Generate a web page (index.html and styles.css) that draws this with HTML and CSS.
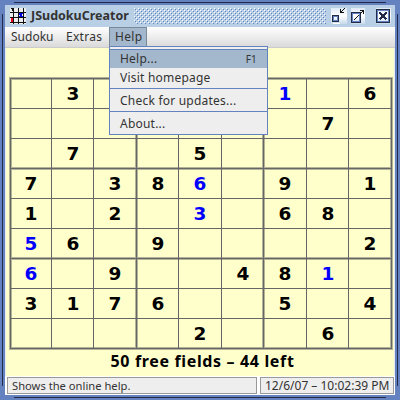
FILE: index.html
```
<!DOCTYPE html>
<html lang="en"><head><meta charset="utf-8"><title>JSudokuCreator</title><link rel="stylesheet" href="styles.css"></head>
<body>
<div class="window">
<i class="edge top"></i><i class="edge bottom"></i><i class="edge left"></i><i class="edge right"></i>
<header class="titlebar">
<svg class="logo" width="16" height="16" shape-rendering="crispEdges"><path fill="#eee" d="M0 0h16v16H0z"/><path fill="#111" d="M3 0h1v16h-1zM8 0h1v16h-1zM13 0h1v16h-1zM0 4h16v1H0zM0 9h16v1H0zM0 14h16v1H0zM1 0h2v3h-1v-2h-1z"/><path fill="#00d" d="M9 5h4v1h-1v2h1v1H9V8h1V7H9z"/><path fill="#e02" d="M1 10h2v4H1z"/></svg>
<span class="title">JSudokuCreator</span>
<svg class="bumps" width="192" height="16" shape-rendering="crispEdges"><defs><pattern id="b" width="4" height="4" patternUnits="userSpaceOnUse"><path fill="#fff" d="M0 0h1v1H0zM2 2h1v1H2z"/><path fill="#6382bf" d="M1 1h1v1H1zM3 3h1v1H3z"/></pattern></defs><path fill="url(#b)" d="M0 0h192v16H0z"/></svg>
<svg class="buttons" width="60" height="16" shape-rendering="crispEdges"><defs><linearGradient id="g" x2="0" y2="1"><stop stop-color="#dfeaf5"/><stop offset=".5" stop-color="#fff"/><stop offset="1" stop-color="#c7d9eb"/></linearGradient></defs>
<path fill="url(#g)" d="M0 0h16v16H0zM20 0h14v16H20zM45 0h15v16H45z"/>
<path fill="#fff" d="M2 15h7v1H2z"/><path fill="none" stroke="#222b48" d="M1.500 7.500h6v6h-6z"/><path fill="none" stroke="#6382bf" d="M2.500 8.500h4v4h-4z"/><path fill="#111" d="M9 1h1v3h3v1H9zM10 3h1v1h-1zM11 2h1v1h-1zM12 1h1v1h-1zM13 0h1v1h-1z"/>
<path fill="none" stroke="#222b48" d="M20.500 4.500h9v10h-9z"/><path fill="none" stroke="#6382bf" d="M21.500 5.500h7v8h-7z"/><path fill="#111" d="M23 11h1v1h-1zM24 10h1v1h-1zM25 9h1v1h-1zM26 8h1v1h-1zM27 7h1v1h-1zM29 5h1v1h-1zM30 4h1v1h-1zM31 3h1v1h-1zM29 2h4v4h-1V3h-3z"/>
<path fill="none" stroke="#222b48" d="M45.500 1.500h13v13h-13z"/><path fill="none" stroke="#6382bf" d="M46.500 2.500h11v11h-11z"/><path stroke="#222b48" stroke-width="1.500" d="M48.500 4.500l7 7m0-7l-7 7"/></svg>
</header>
<nav class="menubar"><span class="m1">Sudoku</span><span class="m2">Extras</span><span class="m3">Help</span></nav>
<main class="board-area">
<svg class="board" width="384" height="273" viewBox="0 0 384 273" shape-rendering="crispEdges" overflow="visible">
<path fill="#b3b398" d="M0-1h384v3H0zM0 89h384v3H0zM0 179h384v3H0zM0 269h384v3H0zM0-1h3v273H0zM126-1h3v273h-3zM253-1h3v273h-3zM381-1h3v273h-3z"/>
<path fill="#666" d="M1 0h382v1H1zM1 30h382v1H1zM1 60h382v1H1zM1 90h382v1H1zM1 120h382v1H1zM1 150h382v1H1zM1 180h382v1H1zM1 210h382v1H1zM1 240h382v1H1zM1 270h382v1H1zM1 0h1v271H1zM42 0h1v271h-1zM84 0h1v271h-1zM127 0h1v271h-1zM169 0h1v271h-1zM212 0h1v271h-1zM254 0h1v271h-1zM297 0h1v271h-1zM339 0h1v271h-1zM382 0h1v271h-1z"/>
<g class="digits"><text x="64" y="22">3</text><text x="361" y="22">6</text><text x="319" y="52">7</text><text x="64" y="82">7</text><text x="191" y="82">5</text><text x="22" y="112">7</text><text x="106" y="112">3</text><text x="149" y="112">8</text><text x="276" y="112">9</text><text x="361" y="112">1</text><text x="22" y="142">1</text><text x="106" y="142">2</text><text x="276" y="142">6</text><text x="319" y="142">8</text><text x="64" y="172">6</text><text x="149" y="172">9</text><text x="361" y="172">2</text><text x="106" y="202">9</text><text x="234" y="202">4</text><text x="276" y="202">8</text><text x="22" y="232">3</text><text x="64" y="232">1</text><text x="106" y="232">7</text><text x="149" y="232">6</text><text x="276" y="232">5</text><text x="361" y="232">4</text><text x="191" y="262">2</text><text x="319" y="262">6</text></g>
<g class="digits entered"><text x="276" y="22">1</text><text x="191" y="112">6</text><text x="191" y="142">3</text><text x="22" y="172">5</text><text x="22" y="202">6</text><text x="319" y="202">1</text></g>
</svg>
<div class="count">50 free fields – 44 left</div>
</main>
<footer class="status"><span class="hint">Shows the online help.</span><span class="clock">12/6/07 – 10:02:39 PM</span></footer>
<div class="menu"><div class="item selected"><span>Help...</span><kbd>F1</kbd></div><div class="item visit">Visit homepage</div><div class="item sep">Check for updates...</div><div class="item sep">About...</div></div>
</div>
</body></html>
```
FILE: styles.css
```
*{box-sizing:border-box}
body{margin:0;background:#fff;font:12px "Noto Sans",sans-serif;color:#333}
.window{position:relative;width:400px;height:400px;border:5px solid #6382bf;display:flex;flex-direction:column;background:#eee}
.edge{position:absolute;background:#222b48}
.top{top:-3px;left:9px;right:9px;height:1px}
.bottom{bottom:-3px;left:9px;right:9px;height:1px}
.left{left:-3px;top:9px;bottom:9px;width:1px}
.right{right:-3px;top:9px;bottom:9px;width:1px}
.titlebar{height:22px;background:#b8cfe5;display:flex;padding:3px 4px 0 5px;flex:none}
.title{width:103px;margin-left:5px;font:bold 12.5px/16px "Noto Sans",sans-serif;white-space:nowrap}
.bumps{margin-right:5px}
.logo,.bumps,.buttons{flex:none}
.menubar{height:21px;flex:none;background:linear-gradient(#fff,#dadada);border-bottom:1px solid #ccc;display:flex;line-height:19px;letter-spacing:.3px}
.menubar>span{padding-left:5px}
.menubar .m1{width:55px;padding-left:6px;letter-spacing:0}
.menubar .m2{width:49px;padding-left:6px}
.menubar .m3{width:38px;background:#a3b8cc;border:1px solid #7a8a99;border-bottom:0;line-height:17px}
.board-area{flex:1;background:#ffc;border:solid #e4ecf4;border-width:0 1px;padding:30px 0 0 3px}
.board{display:block}
.digits{font:bold 18.5px "DejaVu Sans",sans-serif;text-anchor:middle;fill:#000}
.entered{fill:#00f}
.count{font:bold 16px/20px "Noto Sans",sans-serif;color:#000;text-align:center;letter-spacing:.65px;margin-right:-2px}
.status{height:19px;flex:none;background:#fff;padding:1px 1px 1px 2px;display:flex;gap:3px;line-height:16px;white-space:nowrap}
.status span{border:1px solid #999;background:#eee;padding-left:4px;height:17px}
.hint{width:250px;font-size:11.2px}
.clock{width:134px}
.menu{position:absolute;left:104px;top:41px;width:159px;height:89px;border:1px solid #6382bf;background:#eee;line-height:18px;padding-top:2px;letter-spacing:.22px}
.item{height:23px;padding:3px 10px 0;border-top:1px solid #6382bf}
.selected{display:flex;justify-content:space-between;height:19px;padding-top:0;background:#a3b8cc}
kbd{font:10px/18px "Noto Sans",sans-serif}
.visit{height:20px;border:0;padding-top:1px}
```
